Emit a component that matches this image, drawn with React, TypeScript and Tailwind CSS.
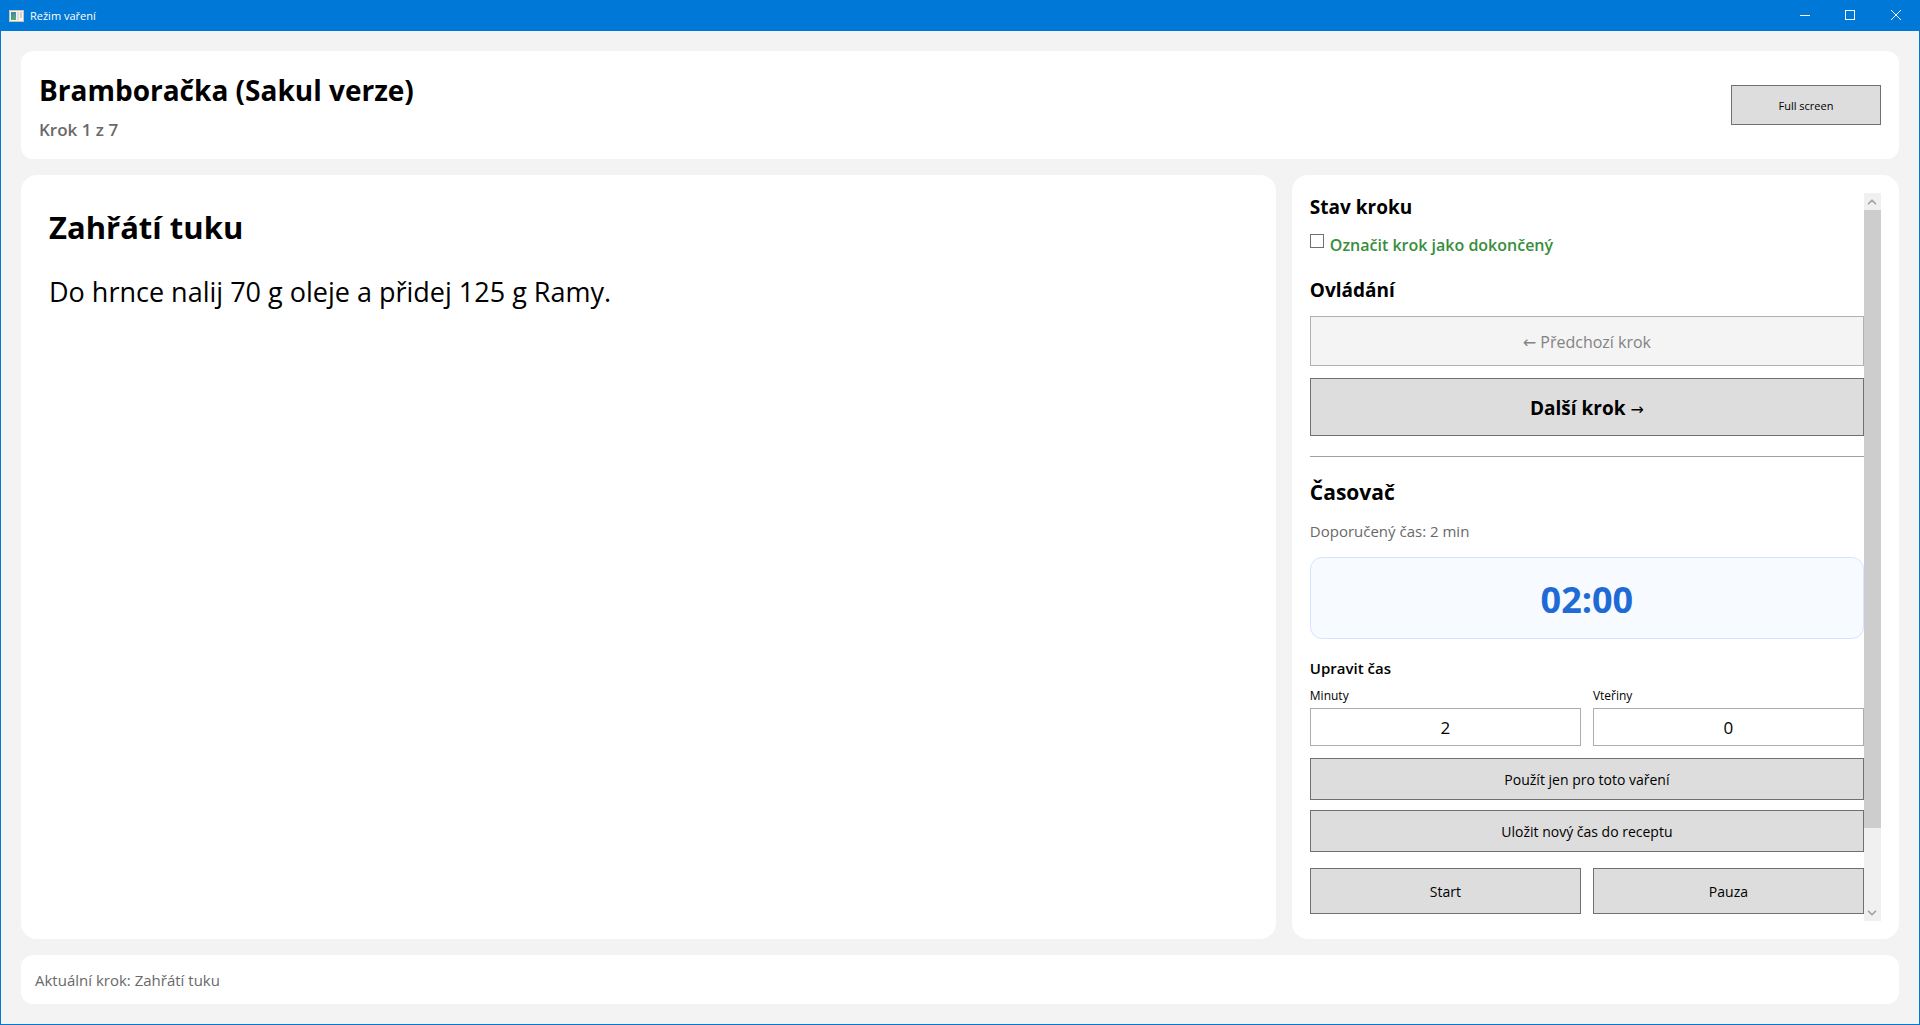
import * as React from "react"
import { ChevronDown, ChevronUp } from "lucide-react"

const recipe = {
  name: "Bramboračka (Sakul verze)",
  stepCount: 7,
  title: "Zahřátí tuku",
  text: "Do hrnce nalij 70 g oleje a přidej 125 g Ramy.",
  minutes: 2,
}

const button = "border border-[#707070] bg-[#dddddd] text-black"
const input =
  "h-[38px] w-full border border-[#abadb3] bg-white text-center text-[17px] text-black outline-none"
const arrow = "font-['DejaVu_Sans',sans-serif] text-[16px] leading-none font-normal"

function TitleBar() {
  return (
    <header className="flex h-[30px] items-center bg-[#0078d7] pl-2 text-white">
      <svg width="15" height="12" viewBox="0 0 15 12" className="mr-1.5">
        <defs>
          <linearGradient id="pane" x1="0" y1="0" x2="0.4" y2="1">
            <stop offset="0" stopColor="#4a78b0" />
            <stop offset="1" stopColor="#4fae6a" />
          </linearGradient>
        </defs>
        <rect x="0.5" y="0.5" width="14" height="11" fill="#f4f4f4" stroke="#c9c2bb" />
        <rect x="2" y="2" width="5" height="8" fill="url(#pane)" />
        <rect x="8" y="2" width="2" height="8" fill="#dcdcdc" />
        <rect x="11" y="2" width="2" height="6" fill="#cfcfcf" />
      </svg>
      <span className="flex-1 text-[11px]">Režim vaření</span>
      <div className="flex h-7 self-start">
        <button aria-label="Minimalizovat" className="flex w-11 items-center justify-center">
          <svg width="10" height="10" viewBox="0 0 10 10" stroke="white">
            <path d="M0 5.5H10" />
          </svg>
        </button>
        <button aria-label="Maximalizovat" className="flex w-[46px] items-center justify-center">
          <svg width="10" height="10" viewBox="0 0 10 10" stroke="white" fill="none">
            <rect x="0.5" y="0.5" width="9" height="9" />
          </svg>
        </button>
        <button aria-label="Zavřít" className="flex w-[46px] items-center justify-center">
          <svg width="10" height="10" viewBox="0 0 10 10" stroke="white">
            <path d="M0 0L10 10M10 0L0 10" />
          </svg>
        </button>
      </div>
    </header>
  )
}

function ScrollBar() {
  return (
    <div className="flex w-[17px] shrink-0 flex-col bg-[#f0f0f0] text-[#a3a3a3]">
      <div className="flex h-[17px] items-center justify-center">
        <ChevronUp size={14} strokeWidth={3} />
      </div>
      <div className="flex-1">
        <div className="h-[89%] bg-[#cdcdcd]" />
      </div>
      <div className="flex h-[17px] items-center justify-center">
        <ChevronDown size={14} strokeWidth={3} />
      </div>
    </div>
  )
}

export default function App() {
  const [done, setDone] = React.useState(false)
  const [minutes, setMinutes] = React.useState(String(recipe.minutes))
  const [seconds, setSeconds] = React.useState("0")

  return (
    <div className="flex min-h-screen flex-col border border-[#0078d7] bg-[#f3f3f3] font-['Open_Sans',sans-serif] text-black">
      <TitleBar />

      <main className="flex flex-1 flex-col gap-4 p-5">
        <section className="flex items-center justify-between rounded-xl bg-white p-[18px]">
          <div>
            <h1 className="text-[28px] leading-[42px] font-bold">{recipe.name}</h1>
            <p className="mt-2 text-[17px] leading-[22px] font-semibold text-[#696969]">
              Krok 1 z {recipe.stepCount}
            </p>
          </div>
          <button className={`h-10 w-[150px] pt-0.5 text-[11px] ${button}`}>Full screen</button>
        </section>

        <div className="grid flex-1 grid-cols-[31fr_15fr] gap-4">
          <section className="rounded-2xl bg-white p-7">
            <h2 className="text-[31px] leading-[48px] font-bold">{recipe.title}</h2>
            <p className="mt-[22px] text-[27px] leading-[38px]">{recipe.text}</p>
          </section>

          <section className="flex rounded-2xl bg-white p-[18px]">
            <div className="flex min-w-0 flex-1 flex-col">
              <h3 className="text-[19px] leading-7 font-bold">Stav kroku</h3>
              <label className="mt-3 flex items-start gap-1.5 text-[16px] leading-6 font-semibold text-[#388e3c]">
                <input
                  type="checkbox"
                  checked={done}
                  onChange={(e) => setDone(e.target.checked)}
                  className="mt-px size-[14px] appearance-none border border-[#707070] bg-white checked:bg-[#388e3c]"
                />
                Označit krok jako dokončený
              </label>

              <h3 className="mt-[19px] text-[19px] leading-7 font-bold">Ovládání</h3>
              <button
                disabled
                className="mt-3 h-[50px] border border-[#adb2b5] bg-[#f4f4f4] pt-0.5 text-[16px] text-[#838383]"
              >
                <span className={arrow}>←</span> Předchozí krok
              </button>
              <button className={`mt-3 h-[58px] pt-0.5 text-[19px] font-bold ${button}`}>
                Další krok <span className={arrow}>→</span>
              </button>

              <hr className="mt-5 border-[#a0a0a0]" />

              <h3 className="mt-[19px] text-[21px] leading-8 font-bold">Časovač</h3>
              <p className="mt-[11px] text-[15px] leading-6 text-[#696969]">
                Doporučený čas: {recipe.minutes} min
              </p>
              <div className="mt-3.5 flex h-[82px] items-center justify-center rounded-xl border border-[#d6e4ff] bg-[#f7faff] pt-1 text-[36px] font-bold text-[#1e6bd6]">
                02:00
              </div>

              <h4 className="mt-[17px] text-[15px] leading-6 font-semibold">Upravit čas</h4>
              <div className="mt-1.5 grid grid-cols-2 gap-3">
                <label className="flex flex-col gap-0.5 text-[12px] leading-5">
                  Minuty
                  <input value={minutes} onChange={(e) => setMinutes(e.target.value)} className={input} />
                </label>
                <label className="flex flex-col gap-0.5 text-[12px] leading-5">
                  Vteřiny
                  <input value={seconds} onChange={(e) => setSeconds(e.target.value)} className={input} />
                </label>
              </div>

              <button className={`mt-3 h-[42px] text-[14px] ${button}`}>Použít jen pro toto vaření</button>
              <button className={`mt-2.5 h-[42px] text-[14px] ${button}`}>Uložit nový čas do receptu</button>
              <div className="mt-4 grid grid-cols-2 gap-3">
                <button className={`h-[46px] text-[14px] ${button}`}>Start</button>
                <button className={`h-[46px] text-[14px] ${button}`}>Pauza</button>
              </div>
            </div>
            <ScrollBar />
          </section>
        </div>

        <footer className="rounded-xl bg-white px-3.5 pt-[13px] pb-[11px] text-[15px] leading-[25px] text-[#696969]">
          Aktuální krok: {recipe.title}
        </footer>
      </main>
    </div>
  )
}
